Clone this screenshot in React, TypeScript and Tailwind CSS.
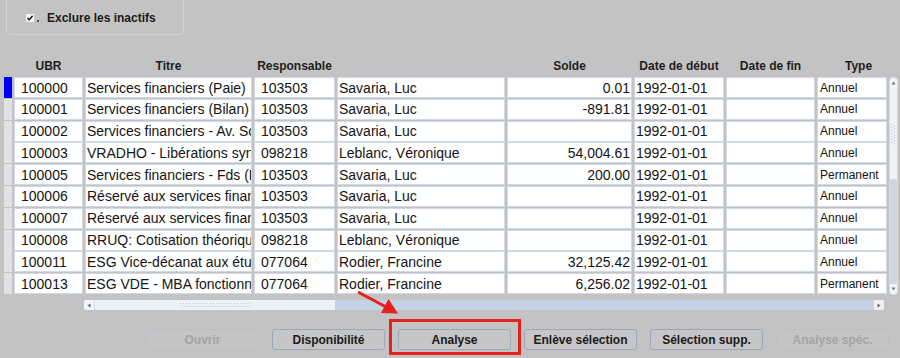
import React from "react";

type Row = {
  ubr: string;
  titre: string;
  resp: string;
  nom: string;
  solde: string;
  debut: string;
  fin: string;
  type: string;
};

const rows: Row[] = [
  { ubr: "100000", titre: "Services financiers (Paie)", resp: "103503", nom: "Savaria, Luc", solde: "0.01", debut: "1992-01-01", fin: "", type: "Annuel" },
  { ubr: "100001", titre: "Services financiers (Bilan)", resp: "103503", nom: "Savaria, Luc", solde: "-891.81", debut: "1992-01-01", fin: "", type: "Annuel" },
  { ubr: "100002", titre: "Services financiers - Av. Sociaux", resp: "103503", nom: "Savaria, Luc", solde: "", debut: "1992-01-01", fin: "", type: "Annuel" },
  { ubr: "100003", titre: "VRADHO - Libérations syndicales", resp: "098218", nom: "Leblanc, Véronique", solde: "54,004.61", debut: "1992-01-01", fin: "", type: "Annuel" },
  { ubr: "100005", titre: "Services financiers - Fds (Réserve)", resp: "103503", nom: "Savaria, Luc", solde: "200.00", debut: "1992-01-01", fin: "", type: "Permanent" },
  { ubr: "100006", titre: "Réservé aux services financiers", resp: "103503", nom: "Savaria, Luc", solde: "", debut: "1992-01-01", fin: "", type: "Annuel" },
  { ubr: "100007", titre: "Réservé aux services financiers", resp: "103503", nom: "Savaria, Luc", solde: "", debut: "1992-01-01", fin: "", type: "Annuel" },
  { ubr: "100008", titre: "RRUQ: Cotisation théorique", resp: "098218", nom: "Leblanc, Véronique", solde: "", debut: "1992-01-01", fin: "", type: "Annuel" },
  { ubr: "100011", titre: "ESG Vice-décanat aux études", resp: "077064", nom: "Rodier, Francine", solde: "32,125.42", debut: "1992-01-01", fin: "", type: "Annuel" },
  { ubr: "100013", titre: "ESG VDE - MBA fonctionnement", resp: "077064", nom: "Rodier, Francine", solde: "6,256.02", debut: "1992-01-01", fin: "", type: "Permanent" },
];

const cell =
  "h-[21px] pt-[1px] bg-white border border-[#d0d9e5] overflow-hidden whitespace-nowrap flex items-center text-[14px] leading-[19px] text-[#141414]";

function GripDots({ vertical }: { vertical?: boolean }) {
  if (vertical) {
    return (
      <svg width="7" height="22" viewBox="0 0 7 22">
        {[0, 1, 2, 3, 4, 5, 6].map((i) => (
          <g key={i}>
            <rect x={1} y={1 + i * 3} width="1" height="1" fill="#b6c0cc" />
            <rect x={4} y={2.5 + i * 3} width="1" height="1" fill="#b6c0cc" />
          </g>
        ))}
      </svg>
    );
  }
  return (
    <svg width="72" height="6" viewBox="0 0 72 6">
      {Array.from({ length: 24 }).map((_, i) => (
        <g key={i}>
          <rect x={1 + i * 3} y={1} width="1" height="1" fill="#bcc5d0" />
          <rect x={2.5 + i * 3} y={4} width="1" height="1" fill="#bcc5d0" />
        </g>
      ))}
    </svg>
  );
}

function Btn({ label, disabled }: { label: string; disabled?: boolean }) {
  return (
    <div
      className={
        "w-[113px] h-[21px] rounded-[3px] border flex items-center justify-center text-[12px] font-bold " +
        (disabled
          ? "border-[#b9c0ca] text-[#a4a4a4] bg-[#c4c4c4]"
          : "border-[#9ca8b9] text-[#1a1a1a] bg-[#c6c6c6]")
      }
    >
      {label}
    </div>
  );
}

export default function App() {
  return (
    <div className="w-[900px] h-[358px] bg-[#c3c3c3] relative overflow-hidden font-['Liberation_Sans',Arial,sans-serif] text-[#111]">
      {/* Group box with checkbox */}
      <div className="ml-[6px] -mt-[6px] w-[178px] h-[41px] border border-[#ccd4df] rounded-[5px] pt-[16px] pl-[19px]">
        <div className="h-[13px] flex items-center">
          <div className="w-[8px] h-[8px] bg-[#f4f4f4] flex items-center justify-center">
            <svg width="8" height="8" viewBox="0 0 8 8">
              <path d="M1.5 4 L3.3 5.8 L6.6 1.8" stroke="#111" strokeWidth="1.4" fill="none" />
            </svg>
          </div>
          <div className="ml-[3px] mt-[7px] w-[2px] h-[2px] bg-[#555]" />
          <span className="ml-[8px] text-[12px] font-bold text-[#1a1a1a]">Exclure les inactifs</span>
        </div>
      </div>

      {/* Header */}
      <div className="mt-[23px] h-[16px] flex gap-[2px] pl-[4px] text-[12px] font-bold text-[#1e1e1e] items-center">
        <div className="w-[8px]" />
        <div className="w-[69px] text-center">UBR</div>
        <div className="w-[167px] text-center">Titre</div>
        <div className="w-[81px] text-center">Responsable</div>
        <div className="w-[168px]" />
        <div className="w-[125px] text-center">Solde</div>
        <div className="w-[90px] text-center">Date de début</div>
        <div className="w-[89px] text-center">Date de fin</div>
        <div className="w-[81px] text-center pl-[2px]">Type</div>
      </div>

      {/* Table body */}
      <div className="mt-[3px] flex pl-[4px] gap-[2px]">
        <div className="flex flex-col gap-[0.8px]">
          {rows.map((r, i) => (
            <div key={r.ubr} className="flex gap-[2px]">
              <div className={"w-[8px] h-[21px] " + (i === 0 ? "bg-[#0000f0]" : "bg-[#e2e2e2]")} />
              <div className={cell + " w-[69px] pl-[6px]"}>{r.ubr}</div>
              <div className={cell + " w-[167px] pl-[1px]"}>{r.titre}</div>
              <div className={cell + " w-[81px] pl-[6px]"}>{r.resp}</div>
              <div className={cell + " w-[168px] pl-[1px]"}>{r.nom}</div>
              <div className={cell + " w-[125px] justify-end pr-[1px]"}>{r.solde}</div>
              <div className={cell + " w-[90px] pl-[1px]"}>{r.debut}</div>
              <div className={cell + " w-[89px] pl-[1px]"}>{r.fin}</div>
              <div className={cell + " w-[70px] pl-[2px] !text-[12px]"}>{r.type}</div>
            </div>
          ))}
        </div>
        {/* Vertical scrollbar */}
        <div className="w-[9px] h-[218px] flex flex-col rounded-[4px] overflow-hidden bg-[#cfd6df] border border-[#d6dde6]">
          <div className="h-[10px] bg-[#f3f5f8] flex items-center justify-center">
            <svg width="5" height="4" viewBox="0 0 5 4">
              <path d="M2.5 0.5 L4.5 3.5 L0.5 3.5 Z" fill="#6c7480" />
            </svg>
          </div>
          <div className="h-[92px] bg-[#eef1f5] border-b border-[#d8dee6] flex items-center justify-center">
            <GripDots vertical />
          </div>
          <div className="flex-1" />
          <div className="h-[10px] bg-[#f3f5f8] flex items-center justify-center">
            <svg width="5" height="4" viewBox="0 0 5 4">
              <path d="M0.5 0.5 L4.5 0.5 L2.5 3.5 Z" fill="#6c7480" />
            </svg>
          </div>
        </div>
      </div>

      {/* Horizontal scrollbar */}
      <div className="mt-[5px] ml-[84px] w-[800px] h-[10px] flex bg-[#c3d2e5] rounded-[2px] overflow-hidden">
        <div className="w-[11px] h-full bg-[#f2f4f7] border-r border-[#d4dbe4] flex items-center justify-center">
          <svg width="4" height="5" viewBox="0 0 4 5">
            <path d="M0.5 2.5 L3.5 0.5 L3.5 4.5 Z" fill="#5f6773" />
          </svg>
        </div>
        <div className="w-[240px] h-full bg-[#eef1f5] flex items-center justify-center">
          <GripDots />
        </div>
        <div className="flex-1" />
        <div className="w-[10px] h-full bg-[#eef1f5] flex items-center justify-center">
          <svg width="4" height="5" viewBox="0 0 4 5">
            <path d="M0.5 0.5 L3.5 2.5 L0.5 4.5 Z" fill="#5f6773" />
          </svg>
        </div>
      </div>

      {/* Buttons */}
      <div className="mt-[19px] pl-[146px] flex gap-[13px]">
        <Btn label="Ouvrir" disabled />
        <Btn label="Disponibilité" />
        <Btn label="Analyse" />
        <Btn label="Enlève sélection" />
        <Btn label="Sélection supp." />
        <Btn label="Analyse spéc." disabled />
      </div>

      {/* Annotation: red box */}
      <div className="absolute left-[389px] top-[319px] w-[132px] h-[36px] border-[3px] border-[#e5201e]" />
      {/* Annotation: red arrow */}
      <svg className="absolute left-0 top-0" width="900" height="358" viewBox="0 0 900 358">
        <line x1="358" y1="292" x2="388" y2="308" stroke="#e5201e" strokeWidth="3" />
        <path d="M398 313.5 L381 313 L388.5 299 Z" fill="#e5201e" />
      </svg>
    </div>
  );
}
